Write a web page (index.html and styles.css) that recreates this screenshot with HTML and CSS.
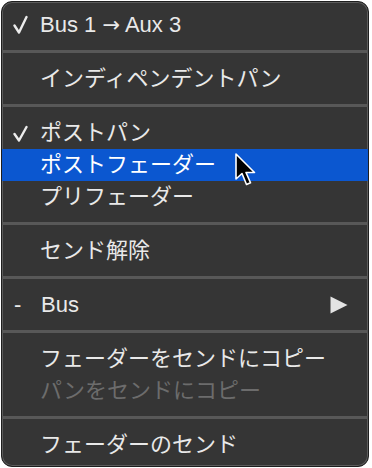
FILE: index.html
```html
<!DOCTYPE html>
<html lang="ja">
<head>
<meta charset="utf-8">
<link rel="stylesheet" href="styles.css">
</head>
<body>
<div class="menu">
  <div class="item">
    <span class="mark"><svg class="check" width="16" height="20" viewBox="0 0 16 20"><polyline points="1.5,10.5 6,17.5 13.5,2"/></svg></span>
    <span class="label">Bus 1 <span class="arrow">→</span> Aux 3</span>
  </div>
  <div class="sep"></div>
  <div class="item"><span class="mark"></span><span class="label">インディペンデントパン</span></div>
  <div class="sep"></div>
  <div class="item">
    <span class="mark"><svg class="check" width="16" height="20" viewBox="0 0 16 20"><polyline points="1.5,11 6,17.5 13.5,4"/></svg></span>
    <span class="label">ポストパン</span>
  </div>
  <div class="item selected"><span class="mark"></span><span class="label">ポストフェーダー</span></div>
  <div class="item"><span class="mark"></span><span class="label">プリフェーダー</span></div>
  <div class="sep"></div>
  <div class="item"><span class="mark"></span><span class="label">センド解除</span></div>
  <div class="sep"></div>
  <div class="item">
    <span class="mark dash">-</span>
    <span class="label">Bus</span>
    <svg class="submenu" width="18" height="18" viewBox="0 0 18 18"><polygon points="0.5,0.5 17.5,9 0.5,17.5"/></svg>
  </div>
  <div class="sep"></div>
  <div class="item"><span class="mark"></span><span class="label">フェーダーをセンドにコピー</span></div>
  <div class="item disabled"><span class="mark"></span><span class="label">パンをセンドにコピー</span></div>
  <div class="sep"></div>
  <div class="item"><span class="mark"></span><span class="label">フェーダーのセンド</span></div>

  <svg class="cursor" width="26" height="36" viewBox="0 0 26 36">
    <polygon points="2,2 2,27 8,21.5 12.5,32.5 16.5,30.8 12,20.5 20.5,20.5"/>
  </svg>
</div>
</body>
</html>
```

FILE: styles.css
```css
html, body {
  margin: 0;
  padding: 0;
  background: #ffffff;
}

body {
  font-family: "Liberation Sans", "Noto Sans CJK JP", sans-serif;
}

.menu {
  position: relative;
  box-sizing: border-box;
  width: 368px;
  margin: 1px 0 0 1px;
  padding: 7px 0 5px;
  background: #353535;
  border: 1px solid #1e1e1e;
  border-radius: 11px;
  box-shadow: inset 0 0 0 1px #5c5c5c;
}

.item {
  display: flex;
  align-items: center;
  height: 32px;
  padding: 0 20px 0 11px;
  font-size: 22px;
  color: #e9e9e9;
  white-space: nowrap;
}

.mark {
  flex: 0 0 27px;
  display: flex;
  align-items: center;
}

.dash {
  font-size: 22px;
  padding-left: 1px;
}

.label {
  flex: 1 1 auto;
  line-height: 32px;
}

.arrow {
  font-family: "DejaVu Sans", sans-serif;
  font-size: 21px;
}

.check polyline {
  fill: none;
  stroke: #ececec;
  stroke-width: 2.4;
  stroke-linecap: round;
  stroke-linejoin: round;
}

.selected {
  background: #0b57d0;
  color: #ffffff;
}

.disabled {
  color: #6c6c6c;
}

.submenu {
  flex: 0 0 auto;
}

.submenu polygon {
  fill: #e4e4e4;
}

.sep {
  height: 3px;
  margin: 9px 0 10px;
  background: #585858;
}

.cursor {
  position: absolute;
  left: 232px;
  top: 150px;
}

.cursor polygon {
  fill: #000000;
  stroke: #ffffff;
  stroke-width: 1.6;
  stroke-linejoin: round;
}
```
